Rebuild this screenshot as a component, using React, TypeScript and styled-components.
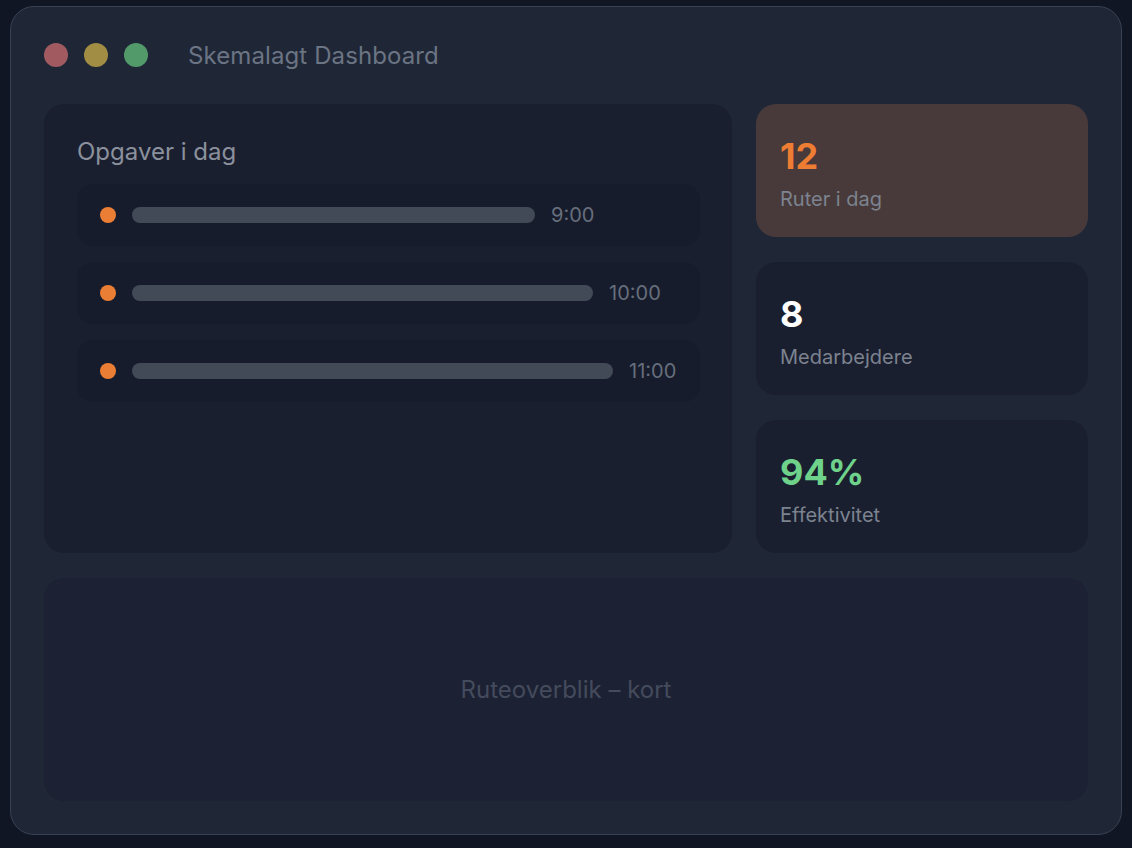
import React from "react";
import styled, { createGlobalStyle } from "styled-components";

const GlobalStyle = createGlobalStyle`
  html, body {
    margin: 0;
    padding: 0;
    background: #111625;
    font-family: Inter, "Noto Sans", sans-serif;
  }
  *, *::before, *::after {
    box-sizing: border-box;
  }
`;

const Page = styled.div`
  padding: 6px 10px 13px;
`;

const Window = styled.div`
  width: 1112px;
  height: 829px;
  border: 1px solid #394252;
  border-radius: 24px;
  background: #1f2737;
  padding: 36px 33px 33px;
  display: flex;
  flex-direction: column;
`;

const TitleBar = styled.div`
  display: flex;
  align-items: center;
  height: 24px;
  margin-bottom: 37px;
`;

const Lights = styled.div`
  display: flex;
  gap: 16px;
  margin-right: 40px;
`;

const Light = styled.span<{ $color: string }>`
  width: 24px;
  height: 24px;
  border-radius: 50%;
  background: ${(p) => p.$color};
`;

const WindowTitle = styled.h1`
  margin: 0;
  font-size: 24px;
  font-weight: 400;
  letter-spacing: 0.1px;
  color: #6b7483;
`;

const Main = styled.div`
  display: grid;
  grid-template-columns: 688px 332px;
  gap: 24px;
  height: 449px;
`;

const TasksPanel = styled.section`
  background: #1a1f30;
  border-radius: 20px;
  padding: 34px 32px 0 33px;
  display: flex;
  flex-direction: column;
`;

const PanelTitle = styled.h2`
  margin: 0 0 18px;
  font-size: 24px;
  font-weight: 400;
  line-height: 28px;
  color: #8b919c;
`;

const TaskList = styled.div`
  display: flex;
  flex-direction: column;
  gap: 16px;
`;

const TaskRow = styled.div`
  height: 62px;
  border-radius: 16px;
  background: #171c2c;
  display: flex;
  align-items: center;
  gap: 16px;
  padding: 0 23px;
`;

const TaskDot = styled.span`
  width: 16px;
  height: 16px;
  border-radius: 50%;
  background: #eb7e35;
  flex: none;
`;

const TaskBar = styled.span`
  height: 16px;
  border-radius: 8px;
  background: #424a57;
  flex: none;
`;

const TaskTime = styled.span`
  font-size: 20px;
  color: #666e7c;
`;

const Stats = styled.div`
  display: flex;
  flex-direction: column;
  gap: 25px;
`;

const StatCard = styled.div<{ $highlight?: boolean }>`
  height: 133px;
  border-radius: 20px;
  background: ${(p) => (p.$highlight ? "#483a3a" : "#1a1f30")};
  padding: 32px 24px 0;
  display: flex;
  flex-direction: column;
`;

const StatValue = styled.div<{ $color: string }>`
  font-size: 36px;
  font-weight: 700;
  line-height: 40px;
  color: ${(p) => p.$color};
`;

const StatLabel = styled.div`
  margin-top: 11px;
  font-size: 20px;
  line-height: 24px;
  color: #7c838f;
`;

const MapPanel = styled.section`
  margin-top: 25px;
  height: 223px;
  border-radius: 20px;
  background: #1c2133;
  display: flex;
  align-items: center;
  justify-content: center;
  font-size: 24px;
  color: #444b5c;
`;

const tasks = [
  { time: "9:00", width: 403 },
  { time: "10:00", width: 461 },
  { time: "11:00", width: 481 },
];

const stats = [
  { value: "12", label: "Ruter i dag", color: "#ee7d33", highlight: true },
  { value: "8", label: "Medarbejdere", color: "#ffffff" },
  { value: "94%", label: "Effektivitet", color: "#6fd28a" },
];

export default function App() {
  return (
    <Page>
      <GlobalStyle />
      <Window>
        <TitleBar>
          <Lights>
            <Light $color="#a15b60" />
            <Light $color="#a18d44" />
            <Light $color="#529a6a" />
          </Lights>
          <WindowTitle>Skemalagt Dashboard</WindowTitle>
        </TitleBar>
        <Main>
          <TasksPanel>
            <PanelTitle>Opgaver i dag</PanelTitle>
            <TaskList>
              {tasks.map((t) => (
                <TaskRow key={t.time}>
                  <TaskDot />
                  <TaskBar style={{ width: t.width }} />
                  <TaskTime>{t.time}</TaskTime>
                </TaskRow>
              ))}
            </TaskList>
          </TasksPanel>
          <Stats>
            {stats.map((s) => (
              <StatCard key={s.label} $highlight={s.highlight}>
                <StatValue $color={s.color}>{s.value}</StatValue>
                <StatLabel>{s.label}</StatLabel>
              </StatCard>
            ))}
          </Stats>
        </Main>
        <MapPanel>Ruteoverblik – kort</MapPanel>
      </Window>
    </Page>
  );
}
